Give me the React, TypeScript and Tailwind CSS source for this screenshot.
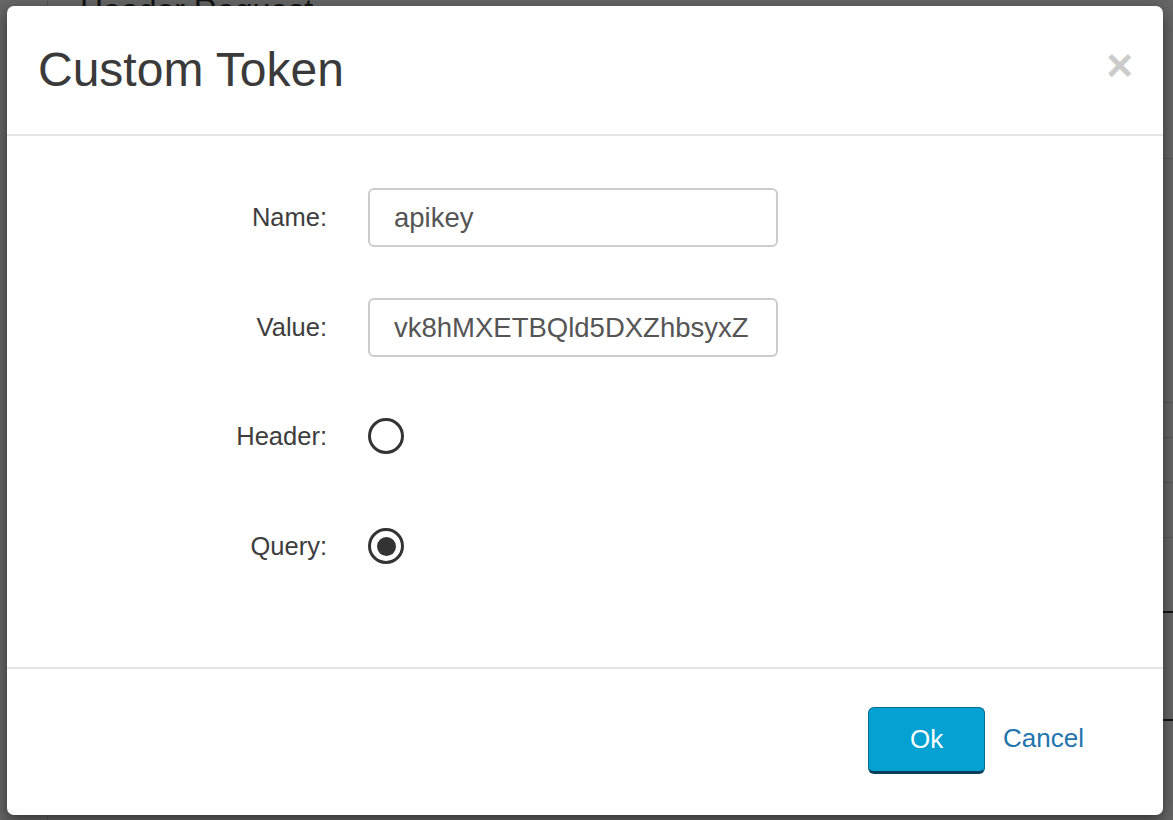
import React from "react";

export default function App() {
  const font = { fontFamily: '"Liberation Sans", Arial, sans-serif' };
  return (
    <div className="relative h-[820px] w-[1173px] overflow-hidden bg-white" style={font}>
      {/* background page */}
      <div className="flex h-full">
        <div className="w-[48px] border-r border-[#ddd]" />
        <div className="flex flex-1 flex-col">
          <div className="-mt-[14px] pl-[32px] text-[32px] text-[#333]">Header Request</div>
          <div className="ml-auto mt-[124px] flex w-[60px] flex-col">
            <div className="h-[130px] border-t border-[#ddd] pt-[115px] pl-[1px] text-[26px] text-[#333]">st</div>
            <div className="h-[115px] border-b border-[#ddd]" />
            <div className="h-[35px] border-b border-[#ddd]" />
            <div className="h-[45px] border-b border-[#ddd]" />
            <div className="h-[55px] border-b border-[#ddd]" />
            <div className="h-[75px] border-b-2 border-[#333]" />
            <div className="h-[108px] border-b-2 border-[#333]" />
          </div>
        </div>
      </div>

      {/* backdrop + modal */}
      <div className="absolute inset-0 bg-black/60 pl-[7px] pt-[6px]">
        <div className="flex h-[809px] w-[1156px] flex-col rounded-[7px] bg-white shadow-[0_5px_15px_rgba(0,0,0,0.5)]">
          {/* header */}
          <div className="flex h-[130px] items-center justify-between border-b-2 border-[#e5e5e5] pl-[31px] pr-[30px]">
            <h4 className="text-[48px] leading-none text-[#3a3a3a]">Custom Token</h4>
            <button className="-mt-[10px] text-[46px] font-bold leading-none text-black opacity-20">×</button>
          </div>

          {/* body */}
          <div className="flex h-[531px] flex-col pt-[52px]">
            {[
              { label: "Name:", value: "apikey", mt: "mt-0" },
              { label: "Value:", value: "vk8hMXETBQld5DXZhbsyxZ", mt: "mt-[51px]" },
            ].map((r) => (
              <div key={r.label} className={`flex items-center ${r.mt}`}>
                <label className="w-[320px] text-right text-[25.5px] text-[#3d3d3d]">{r.label}</label>
                <div className="ml-[41px] flex h-[59px] w-[410px] items-center overflow-hidden rounded-[6px] border-2 border-[#ccc] px-[24px] text-[27.5px] text-[#555] whitespace-nowrap">
                  {r.value}
                </div>
              </div>
            ))}
            {[
              { label: "Header:", checked: false, mt: "mt-[50px]" },
              { label: "Query:", checked: true, mt: "mt-[52px]" },
            ].map((r) => (
              <div key={r.label} className={`flex h-[58px] items-center ${r.mt}`}>
                <label className="w-[320px] text-right text-[25.5px] text-[#3d3d3d]">{r.label}</label>
                <div className="ml-[41px] flex h-[36px] w-[36px] items-center justify-center rounded-full border-[3px] border-[#333]">
                  {r.checked && <div className="h-[19px] w-[19px] rounded-full bg-[#333]" />}
                </div>
              </div>
            ))}
          </div>

          {/* footer */}
          <div className="flex flex-1 items-center justify-end border-t-2 border-[#e5e5e5] pb-[3px] pr-[79px]">
            <button className="h-[67px] w-[117px] rounded-[6px] border border-[#0a6a92] border-b-[3px] border-b-[#0b3e5c] bg-[#05a1d3] text-[26px] text-white">
              Ok
            </button>
            <a className="ml-[18px] -mt-[4px] text-[26px] text-[#1f74ad]">Cancel</a>
          </div>
        </div>
      </div>
    </div>
  );
}
